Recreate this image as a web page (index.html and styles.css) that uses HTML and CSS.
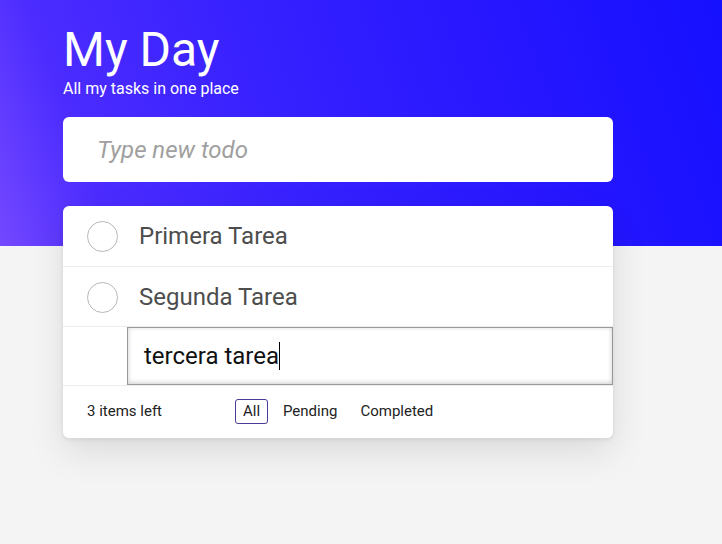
FILE: index.html
```html
<!DOCTYPE html>
<html>
<head>
<meta charset="utf-8">
<link rel="stylesheet" href="styles.css">
</head>
<body>
<div class="hero"></div>
<main class="app">
  <header class="head">
    <h1 class="title">My Day</h1>
    <p class="subtitle">All my tasks in one place</p>
  </header>
  <div class="new-box">
    <span class="placeholder">Type new todo</span>
  </div>
  <section class="list">
    <div class="row">
      <span class="check"></span>
      <span class="label">Primera Tarea</span>
    </div>
    <div class="row">
      <span class="check"></span>
      <span class="label">Segunda Tarea</span>
    </div>
    <div class="row editing">
      <div class="edit"><span class="edit-text">tercera tarea</span><span class="caret"></span></div>
    </div>
    <footer class="foot">
      <span class="count">3 items left</span>
      <nav class="filters">
        <span class="filter active">All</span>
        <span class="filter">Pending</span>
        <span class="filter">Completed</span>
      </nav>
    </footer>
  </section>
</main>
</body>
</html>
```
FILE: styles.css
```css
* { box-sizing: border-box; }
html, body { margin: 0; padding: 0; }
body {
  background: #f4f4f4;
  font-family: Roboto, "Liberation Sans", sans-serif;
  width: 722px;
  height: 544px;
  overflow: hidden;
  position: relative;
}
.hero {
  position: absolute;
  left: 0; top: 0;
  width: 722px;
  height: 246px;
  background: linear-gradient(70deg, #7448ff 0%, #4c2cff 14%, #3520ff 42%, #2616ff 72%, #1510ff 100%);
}
.app {
  position: relative;
  width: 550px;
  margin-left: 63px;
  padding-top: 22px;
}
.head { color: #fff; }
.title {
  margin: 0;
  font-size: 48px;
  font-weight: 400;
  line-height: 56px;
}
.subtitle {
  margin: 0;
  font-size: 16px;
  line-height: 19px;
  margin-top: 1px;
}
.new-box {
  margin-top: 19px;
  height: 65px;
  background: #fff;
  border-radius: 6px;
  display: flex;
  align-items: center;
  padding-left: 34px;
}
.placeholder {
  font-size: 24px;
  font-style: italic;
  color: #a0a0a0;
  font-weight: 400;
}
.list {
  margin-top: 24px;
  background: #fff;
  border-radius: 6px;
  box-shadow: 0 14px 36px rgba(0,0,0,0.10), 0 2px 4px rgba(0,0,0,0.08);
  overflow: hidden;
}
.row {
  height: 60px;
  display: flex;
  align-items: center;
  border-bottom: 1px solid #ededed;
}
.row:first-child { height: 61px; }
.check {
  width: 31px;
  height: 31px;
  border: 1px solid #b8b8b8;
  border-radius: 50%;
  margin-left: 24px;
  margin-top: 1px;
}
.label {
  margin-left: 21px;
  font-size: 24px;
  color: #4d4d4d;
}
.row.editing {
  height: 59px;
  padding-left: 64px;
  align-items: stretch;
}
.edit {
  flex: 1;
  border: 1px solid #999;
  box-shadow: inset 0 -1px 5px rgba(0,0,0,0.2);
  display: flex;
  align-items: center;
  padding-left: 16px;
  font-size: 24px;
  color: #111;
}
.caret {
  display: inline-block;
  width: 1px;
  height: 28px;
  background: #000;
}
.foot {
  height: 52px;
  display: flex;
  align-items: center;
  padding-left: 24px;
  padding-bottom: 2px;
  font-size: 15px;
  color: #222;
}
.count { width: 148px; }
.filters { display: flex; gap: 7px; }
.filter {
  padding: 3px 7px;
  border: 1px solid transparent;
  border-radius: 3px;
  line-height: 17px;
}
.filter.active { border-color: #4a3a9a; width: 33px; }
```
